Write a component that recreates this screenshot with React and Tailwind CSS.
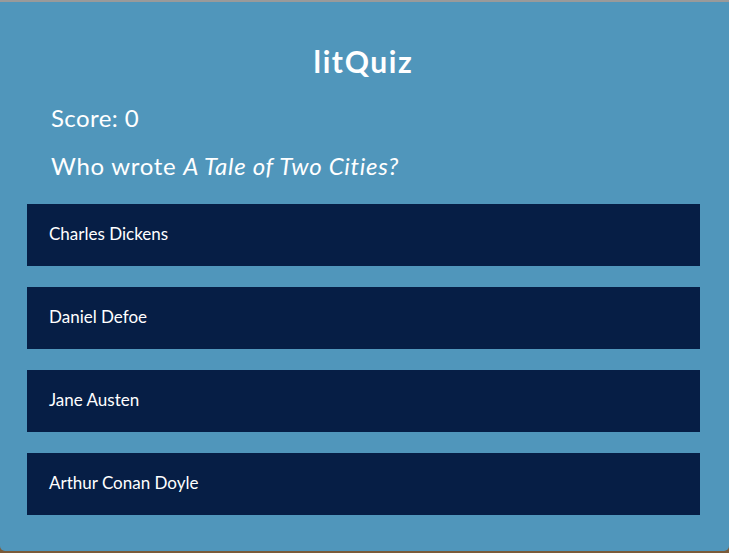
import React from "react";

const answers = [
  "Charles Dickens",
  "Daniel Defoe",
  "Jane Austen",
  "Arthur Conan Doyle",
];

const App = () => {
  return (
    <div
      className="h-[553px] w-[729px] flex flex-col bg-[#7b5b3a] overflow-hidden"
      style={{ fontFamily: "Lato, 'Open Sans', sans-serif" }}
    >
      <div className="h-[2px] bg-[#9a9a9a]" />
      {/* Quiz panel */}
      <div className="flex-1 bg-[#5096bb] rounded-b-[5px] text-white pt-[42px]">
        <h1 className="text-center text-[30px] leading-[34px] font-bold tracking-[1.6px] pr-[2px]">
          litQuiz
        </h1>
        <div className="mt-[26px] pl-[51px] text-[24px] leading-[28px] tracking-[0.4px]">
          Score: 0
        </div>
        <div className="mt-[20px] pl-[51px] text-[24px] leading-[28px] tracking-[0.7px]">
          Who wrote <em>A Tale of Two Cities?</em>
        </div>
        <div className="mt-[24px] flex flex-col gap-[21px] pl-[27px] pr-[29px]">
          {answers.map((answer) => (
            <button
              key={answer}
              className="h-[62px] bg-[#061e45] text-left pl-[22px] pb-[2px] text-[17px] text-white"
            >
              {answer}
            </button>
          ))}
        </div>
      </div>
      <div className="h-[2px]" />
    </div>
  );
};

export default App;
